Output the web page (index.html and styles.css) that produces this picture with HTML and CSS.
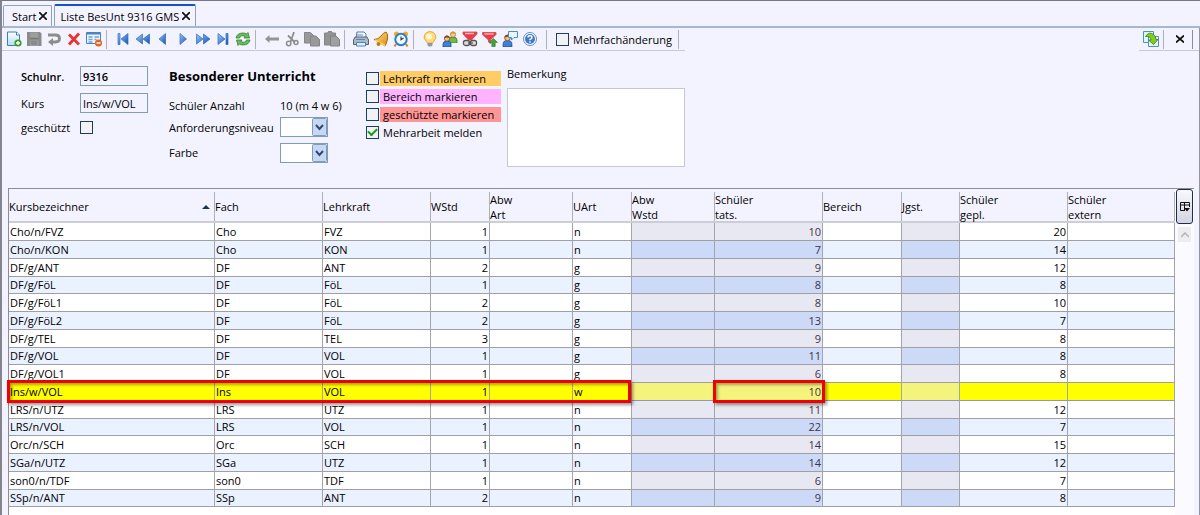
FILE: index.html
```html
<!DOCTYPE html>
<html lang="de">
<head>
<meta charset="utf-8">
<title>Liste BesUnt 9316 GMS</title>
<link rel="stylesheet" href="styles.css">
</head>
<body>
<svg class="defs" aria-hidden="true">
  <defs>
    <linearGradient id="blue" x1="0" y1="0" x2="1" y2="1"><stop offset="0" stop-color="#9cc8f4"/><stop offset="1" stop-color="#1450b4"/></linearGradient>
    <linearGradient id="gold" x1="0" y1="0" x2="1" y2="1"><stop offset="0" stop-color="#ffe27a"/><stop offset="1" stop-color="#d88a10"/></linearGradient>
    <linearGradient id="page" x1="0" y1="0" x2="0" y2="1"><stop offset="0" stop-color="#ffffff"/><stop offset="1" stop-color="#b4dcf4"/></linearGradient>
    <symbol id="person" viewBox="0 0 10 12"><path d="M1 12V9q0-3 4-3t4 3v3z" fill="#3c82d8" stroke="#1c4c96" stroke-width=".8"/><circle cx="5" cy="3.6" r="2.6" fill="#f6bf8a" stroke="#7a4216" stroke-width=".7"/><path d="M2.2 3.4Q2.4.6 5 .6t2.8 2.6Q5 1.8 2.2 3.4z" fill="#824618"/></symbol>
    <symbol id="person-green" viewBox="0 0 10 12"><path d="M1 12V9q0-3 4-3t4 3v3z" fill="#6cbc48" stroke="#377a22" stroke-width=".8"/><circle cx="5" cy="3.6" r="2.6" fill="#f8c890" stroke="#b07020" stroke-width=".7"/><path d="M2.2 3.4Q2.4.6 5 .6t2.8 2.6Q5 1.8 2.2 3.4z" fill="#d89830"/></symbol>
  </defs>
</svg>
<div class="app">
  <nav class="tabs">
    <div class="tab"><span>Start</span><button class="tab-close" aria-label="Start schließen"><svg viewBox="0 0 8 8"><path d="M0 0l8 8M8 0L0 8"/></svg></button></div>
    <div class="tab tab-active"><span>Liste BesUnt 9316 GMS</span><button class="tab-close" aria-label="Liste schließen"><svg viewBox="0 0 8 8"><path d="M0 0l8 8M8 0L0 8"/></svg></button></div>
  </nav>

  <main class="pane">
  <div class="toolbar">
    <div class="tools">
      <div class="group">
        <button aria-label="Neu"><svg viewBox="0 0 16 16"><path d="M1.5 1h9l3 3v10.5h-12z" fill="url(#page)" stroke="#3a80b8"/><path d="M10.500 1v3h3" fill="#fff" stroke="#3a80b8"/><circle cx="12" cy="12" r="3.600" fill="#3f9a2c"/><path d="M12 10v4M10 12h4" stroke="#fff" stroke-width="1.300"/></svg></button>
        <button aria-label="Speichern"><svg viewBox="0 0 16 16"><path d="M1 1h13l1.500 1.500V15H1z" fill="#8b8b8b"/><path d="M4 1.500h8v5H4zM4 9.500h8.500V15H4z" fill="#9e9e9e"/><path d="M4 7.500h8M5 11h6M5 13h6" stroke="#777"/></svg></button>
        <button aria-label="Rückgängig"><svg viewBox="0 0 16 16"><path d="M2 4h7.500q4 0 4 3.500T9.500 11H5" fill="none" stroke="#8c8c8c" stroke-width="2.800"/><path d="M7 7v8l-5-4z" fill="#8c8c8c"/></svg></button>
        <button aria-label="Löschen"><svg viewBox="0 0 16 16"><path d="M3 3.500l10 10M13 2.500l-10 11" stroke="#ee3030" stroke-width="2.800"/></svg></button>
        <button aria-label="Formular leeren"><svg viewBox="0 0 16 16"><path d="M.500 1.500h14v11H.500z" fill="#e8f3fc" stroke="#4a82be"/><path d="M.500 1.500h14v2H.500z" fill="#4a86cc"/><path d="M2.500 6h4M2.500 8.500h4M2.500 11h4M8.500 6h4.500M8.500 8.500h2" stroke="#78a4d0" stroke-width="1.300"/><circle cx="12.500" cy="12" r="3.500" fill="#e8641c"/><path d="M10.500 12h4" stroke="#fff" stroke-width="1.400"/></svg></button>
      </div>
      <span class="sep"></span>
      <div class="group blue">
        <button aria-label="Erster"><svg viewBox="0 0 16 16"><path d="M3 2.500h2v11H3zM13 2.500v11L6 8z"/></svg></button>
        <button aria-label="Zurückspringen"><svg viewBox="0 0 16 16"><path d="M7.500 3v10L1 8zM14.500 3v10L8 8z"/></svg></button>
        <button aria-label="Vorheriger"><svg viewBox="0 0 16 16"><path d="M10.500 2.500v11L4 8z"/></svg></button>
        <button aria-label="Nächster"><svg viewBox="0 0 16 16"><path d="M5 2.500v11L11.500 8z"/></svg></button>
        <button aria-label="Vorspringen"><svg viewBox="0 0 16 16"><path d="M1.500 3v10L8 8zM8.500 3v10L15 8z"/></svg></button>
        <button aria-label="Letzter"><svg viewBox="0 0 16 16"><path d="M3 2.500v11L10 8zM11 2.500h2v11h-2z"/></svg></button>
        <button aria-label="Aktualisieren"><svg class="plain" viewBox="0 0 16 16"><path d="M1 7q1-5 7-5 2 0 3.500 1L13 1.500l1.500 5.500H9l1.200-1.600Q5.500 3.600 4.500 7z" fill="#6dba5c" stroke="#2e8436" stroke-width=".8"/><path d="M15 9q-1 5-7 5-2 0-3.500-1L3 14.500 1.500 9H7l-1.200 1.600Q10.500 12.400 11.500 9z" fill="#6dba5c" stroke="#2e8436" stroke-width=".8"/></svg></button>
      </div>
      <span class="sep"></span>
      <div class="group">
        <button aria-label="Pfeil zurück"><svg viewBox="0 0 16 16"><path d="M1 8l4.500-4v2.500H15v3H5.500V12z" fill="#949494"/></svg></button>
        <button aria-label="Ausschneiden"><svg viewBox="0 0 16 16"><path d="M10 1L6.500 11M4 4.500l7 7" stroke="#8e8e8e" stroke-width="1.800"/><circle cx="4.700" cy="12.500" r="2.200" fill="none" stroke="#8e8e8e" stroke-width="1.500"/><circle cx="12" cy="11.500" r="2" fill="none" stroke="#8e8e8e" stroke-width="1.500"/></svg></button>
        <button aria-label="Kopieren"><svg viewBox="0 0 16 16"><path d="M.500 1.500h6l3 3V12h-9z" fill="#999" stroke="#858585"/><path d="M6.500 5h5.500l3.500 3.500V15h-9z" fill="#999" stroke="#858585"/></svg></button>
        <button aria-label="Einfügen"><svg viewBox="0 0 16 16"><path d="M.500 2h3l1-1.500h3L8.500 2h3v12H.500z" fill="#939393" stroke="#858585"/><path d="M6.500 5h5.500l3.500 3.500V15h-9z" fill="#a0a0a0" stroke="#808080"/></svg></button>
      </div>
      <span class="sep"></span>
      <div class="group">
        <button aria-label="Drucken"><svg viewBox="0 0 16 16"><path d="M4 1h7l2 2v4H3z" fill="#f4faff" stroke="#4c7ca8"/><path d="M2 6h12l1.500 3v4.500H.500V9z" fill="#aeb8c4" stroke="#56606c"/><path d="M3.500 11.500h9V15h-9z" fill="#d8f0ff" stroke="#4c84b4"/><path d="M4 4h6M3 8.500h9" stroke="#468cc8"/></svg></button>
        <button aria-label="Erinnerung"><svg viewBox="0 0 16 16"><path d="M13 1q2.500 2 1.500 7T12 15L1 8.500q4.500 0 7-3.500T13 1z" fill="url(#gold)" stroke="#a8670c"/><path d="M2 9l10 5.500" stroke="#f8d66a" stroke-width="1.500"/><circle cx="5.500" cy="13" r="2" fill="#c07c10"/></svg></button>
        <button aria-label="Termin"><svg viewBox="0 0 16 16"><path d="M3 13l-1.500 2.500M13 13l1.500 2.500" stroke="#d88714" stroke-width="2"/><circle cx="3.500" cy="3" r="2.500" fill="#f0a828"/><circle cx="12.500" cy="3" r="2.500" fill="#f0a828"/><circle cx="8" cy="8.500" r="5.700" fill="#f0faff" stroke="#2f7cc8" stroke-width="2"/><path d="M8 5.500v3.300L10.500 7" fill="none" stroke="#234" stroke-width="1.100"/></svg></button>
      </div>
      <span class="sep"></span>
      <div class="group group-last">
        <button aria-label="Hinweis"><svg viewBox="0 0 16 16"><path d="M8 .5a6 5.500 0 0 0-4 9.500L5.500 12h5l1.500-2A6 5.500 0 0 0 8 .5z" fill="#ffdc78" stroke="#e8a848"/><path d="M5.500 12h5v2.500l-1.500 1H7l-1.500-1z" fill="#9098a4"/><circle cx="7" cy="5.500" r="3" fill="#fff6cc"/></svg></button>
        <button aria-label="Personen"><svg viewBox="0 0 16 16"><use href="#person-green" x="6" y="0" width="10" height="12"/><use href="#person" x="0" y="4" width="10" height="12"/></svg></button>
        <button aria-label="Filter verknüpfen"><svg viewBox="0 0 16 16"><path d="M1 1h14v2L9.500 9H6.500L1 3z" fill="#e83e48" stroke="#d04850" stroke-width=".8"/><path d="M3 2.500h9" stroke="#ffb0b0" stroke-width="1.500"/><rect x="1.500" y="9.500" width="6" height="5" rx="2" fill="#ddd" stroke="#555" stroke-width="1.300"/><rect x="8.500" y="9.500" width="6" height="5" rx="2" fill="#ddd" stroke="#555" stroke-width="1.300"/><path d="M6 12h5" stroke="#555" stroke-width="1.300"/></svg></button>
        <button aria-label="Filter anwenden"><svg viewBox="0 0 16 16"><path d="M.500 1.500h13.500v2L8.500 9v3.500l-2-1.500V9L.500 3.500z" fill="#e83e48" stroke="#d04850" stroke-width=".8"/><path d="M2.500 3h9" stroke="#ffb0b0" stroke-width="1.500"/><path d="M11.500 7.500l4 4h-2.300v4H9.800v-4H7.500z" fill="#3fa43c" stroke="#257a28" stroke-width=".6"/></svg></button>
        <button aria-label="Nachricht"><svg viewBox="0 0 16 16"><use href="#person" x="0" y="3" width="11" height="13"/><path d="M6.500.500h9v6H12L9.500 9V6.500h-3z" fill="#e8f6ff" stroke="#4a8cc8"/></svg></button>
        <button aria-label="Hilfe"><svg viewBox="0 0 16 16"><circle cx="8" cy="8" r="6.500" fill="#fff" stroke="#5a8ecb"/><circle cx="8" cy="8" r="5" fill="#3f78c4"/><path d="M6 6.500Q6 4.800 8 4.800t2 1.600Q10 7.500 8 8.300v1M8 10.300v1.400" fill="none" stroke="#fff" stroke-width="1.400"/></svg></button>
      </div>
      <span class="sep"></span>
      <label class="check"><input type="checkbox">Mehrfachänderung</label>
      <span class="sep"></span>
    </div>
    <div class="tools tools-right">
      <button aria-label="Exportieren"><svg viewBox="0 0 16 16"><path d="M.5.500h10v11H.5z" fill="#e4f4fc" stroke="#4e90c8"/><path d="M5.500 5.500h10v10h-10z" fill="#e4f4fc" stroke="#4e90c8"/><path d="M2.500 5.500Q6 0 10.500 3.500q2.500 2 2.500 5h2L10.500 13.500 5.500 9H8Q7.500 5 2.500 5.500z" fill="#86cc1c" stroke="#328018" stroke-width=".8"/></svg></button>
      <span class="sep"></span>
      <button class="close" aria-label="Schließen"><svg viewBox="0 0 8 8"><path d="M0 .5l8 7M8 .5l-8 7"/></svg></button>
      <span class="sep sep-dark"></span>
    </div>
  </div>

  <form class="form">
    <div class="fields">
      <label class="strong" for="nr">Schulnr.</label><input class="strong" id="nr" type="text" value="9316">
      <label for="kurs">Kurs</label><input id="kurs" type="text" value="Ins/w/VOL">
      <label for="gs">geschützt</label><input id="gs" type="checkbox">
    </div>
    <div class="course">
      <h1>Besonderer Unterricht</h1>
      <span>Schüler Anzahl</span><span>10 (m 4 w 6)</span>
      <label for="niveau">Anforderungsniveau</label><select id="niveau"><option></option></select>
      <label for="farbe">Farbe</label><select id="farbe"><option></option></select>
    </div>
    <div class="marks">
      <label class="check orange"><input type="checkbox"><span>Lehrkraft markieren</span></label>
      <label class="check pink"><input type="checkbox"><span>Bereich markieren</span></label>
      <label class="check red"><input type="checkbox"><span>geschützte markieren</span></label>
      <label class="check"><input type="checkbox" checked><span>Mehrarbeit melden</span></label>
    </div>
    <div class="note">
      <label for="bem">Bemerkung</label>
      <textarea id="bem"></textarea>
    </div>
  </form>

  <div class="list">
    <div class="grid">
      <table>
        <colgroup><col class="w206"><col class="w108"><col class="w108"><col class="w59"><col class="w83"><col class="w59"><col class="w83"><col class="w108"><col class="w79"><col class="w58"><col class="w108"><col class="w107"></colgroup>
        <thead>
          <tr><th><div class="sorted">Kursbezeichner<svg viewBox="0 0 8 4"><path d="M0 4l4-4 4 4z"/></svg></div></th><th><div>Fach</div></th><th><div>Lehrkraft</div></th><th><div>WStd</div></th><th><div>Abw<br>Art</div></th><th><div>UArt</div></th><th><div>Abw<br>Wstd</div></th><th><div>Schüler<br>tats.</div></th><th><div>Bereich</div></th><th><div>Jgst.</div></th><th><div>Schüler<br>gepl.</div></th><th><div>Schüler<br>extern</div></th></tr>
        </thead>
        <tbody>
          <tr><td>Cho/n/FVZ</td><td>Cho</td><td>FVZ</td><td>1</td><td></td><td>n</td><td></td><td>10</td><td></td><td></td><td>20</td><td></td></tr>
          <tr><td>Cho/n/KON</td><td>Cho</td><td>KON</td><td>1</td><td></td><td>n</td><td></td><td>7</td><td></td><td></td><td>14</td><td></td></tr>
          <tr><td>DF/g/ANT</td><td>DF</td><td>ANT</td><td>2</td><td></td><td>g</td><td></td><td>9</td><td></td><td></td><td>12</td><td></td></tr>
          <tr><td>DF/g/FöL</td><td>DF</td><td>FöL</td><td>1</td><td></td><td>g</td><td></td><td>8</td><td></td><td></td><td>8</td><td></td></tr>
          <tr><td>DF/g/FöL1</td><td>DF</td><td>FöL</td><td>2</td><td></td><td>g</td><td></td><td>8</td><td></td><td></td><td>10</td><td></td></tr>
          <tr><td>DF/g/FöL2</td><td>DF</td><td>FöL</td><td>2</td><td></td><td>g</td><td></td><td>13</td><td></td><td></td><td>7</td><td></td></tr>
          <tr><td>DF/g/TEL</td><td>DF</td><td>TEL</td><td>3</td><td></td><td>g</td><td></td><td>9</td><td></td><td></td><td>8</td><td></td></tr>
          <tr><td>DF/g/VOL</td><td>DF</td><td>VOL</td><td>1</td><td></td><td>g</td><td></td><td>11</td><td></td><td></td><td>8</td><td></td></tr>
          <tr><td>DF/g/VOL1</td><td>DF</td><td>VOL</td><td>1</td><td></td><td>g</td><td></td><td>6</td><td></td><td></td><td>8</td><td></td></tr>
          <tr class="selected"><td>Ins/w/VOL</td><td>Ins</td><td>VOL</td><td>1</td><td></td><td>w</td><td></td><td>10</td><td></td><td></td><td></td><td></td></tr>
          <tr><td>LRS/n/UTZ</td><td>LRS</td><td>UTZ</td><td>1</td><td></td><td>n</td><td></td><td>11</td><td></td><td></td><td>12</td><td></td></tr>
          <tr><td>LRS/n/VOL</td><td>LRS</td><td>VOL</td><td>1</td><td></td><td>n</td><td></td><td>22</td><td></td><td></td><td>7</td><td></td></tr>
          <tr><td>Orc/n/SCH</td><td>Orc</td><td>SCH</td><td>1</td><td></td><td>n</td><td></td><td>14</td><td></td><td></td><td>15</td><td></td></tr>
          <tr><td>SGa/n/UTZ</td><td>SGa</td><td>UTZ</td><td>1</td><td></td><td>n</td><td></td><td>14</td><td></td><td></td><td>12</td><td></td></tr>
          <tr><td>son0/n/TDF</td><td>son0</td><td>TDF</td><td>1</td><td></td><td>n</td><td></td><td>6</td><td></td><td></td><td>7</td><td></td></tr>
          <tr><td>SSp/n/ANT</td><td>SSp</td><td>ANT</td><td>2</td><td></td><td>n</td><td></td><td>9</td><td></td><td></td><td>8</td><td></td></tr>
        </tbody>
      </table>
      <span class="frame frame-course"></span>
      <span class="frame frame-count"></span>
    </div>
    <div class="scroll">
      <button class="columns" aria-label="Spalten wählen"><svg viewBox="0 0 10 10"><path d="M5 8.500H.500v-8h9V5M.500 3h9M4.500.500v8" fill="none" stroke="#111"/><path d="M4 6h6L7 9.500z" fill="#111"/></svg></button>
      <button class="up" aria-label="Nach oben"><svg viewBox="0 0 8 6"><path d="M0 5l4-4 4 4" fill="none" stroke="#b4b4b8" stroke-width="1.500"/></svg></button>
    </div>
  </div>
  </main>
</div>
</body>
</html>
```
FILE: styles.css
```css
* { box-sizing: border-box; }
body {
  margin: 0;
  background: #f3f3ff;
  color: #000;
  font: 11px/15px "Open Sans", "Noto Sans", sans-serif;
}
.defs { position: absolute; width: 0; height: 0; }
button { margin: 0; padding: 0; border: 0; background: none; font: inherit; color: inherit; }
svg { display: block; }

.app {
  display: flex;
  flex-direction: column;
  min-height: 100vh;
  border-top: 1px solid #77777f;
  border-left: 2px solid #84848e;
}

.tabs {
  display: flex;
  align-items: flex-end;
  gap: 2px;
  height: 27px;
  padding-left: 1px;
  border-bottom: 2px solid #a8b8cc;
}
.tab {
  display: flex;
  align-items: center;
  gap: 3px;
  height: 21px;
  padding: 0 4px 0 8px;
  border: 1px solid #8ba3bc;
  border-bottom: 0;
  border-radius: 2px 2px 0 0;
}
.tab-active {
  height: 22px;
  padding: 0 5px;
  border-top: 2px solid #1a50c8;
}
.tab-close svg { width: 8px; height: 8px; }
.tab-close path, .close path { fill: none; stroke: #111; stroke-width: 1.7; }

.pane {
  display: flex;
  flex: 1;
  flex-direction: column;
  border-right: 1px solid #9494a0;
}

.toolbar { display: flex; justify-content: space-between; }
.tools {
  display: flex;
  align-items: center;
  height: 23px;
  padding-left: 2px;
  border-bottom: 1px solid #c8c8d4;
}
.tools-right { padding-right: 6px; }
.group { display: flex; }
.group-last { padding-right: 4px; }
.tools button { display: grid; place-items: center; width: 20px; height: 20px; }
.tools svg { width: 16px; height: 16px; }
.blue svg:not(.plain) path { fill: url(#blue); stroke: #2d6cc4; stroke-width: .7; }
.sep { flex: none; width: 1px; height: 19px; margin: 0 6px 0 2px; background: #b0b0b8; }
.sep-dark { margin-right: 0; background: #8c8c94; }
.tools .close svg { width: 8px; height: 8px; }

input[type="checkbox"] {
  appearance: none;
  display: grid;
  place-items: center;
  width: 13px;
  height: 13px;
  margin: 0;
  border: 1px solid #1c3c70;
  background: #f2f2f2;
}
input[type="checkbox"]:checked::after {
  content: "";
  width: 7px;
  height: 4px;
  margin-bottom: 3px;
  border: solid #149a1c;
  border-width: 0 0 2px 2px;
  transform: rotate(-45deg);
}
.check { display: flex; align-items: center; gap: 4px; }
.tools .check { padding: 0 4px 0 3px; }

.form {
  display: flex;
  align-items: flex-start;
  height: 137px;
  padding: 15px 0 0 19px;
  white-space: nowrap;
}
.fields {
  display: grid;
  grid-template-columns: 59px 68px;
  grid-template-rows: 20px 20px 14px;
  row-gap: 7px;
  align-items: center;
  margin-right: 21px;
}
input[type="text"] {
  width: 100%;
  height: 20px;
  padding: 0 2px;
  border: 1px solid #7f9db9;
  background: #f3f3ff;
  color: inherit;
  font: inherit;
}
.fields .strong { font-weight: 600; }
.course {
  display: grid;
  grid-template-columns: 111px 60px;
  grid-template-rows: 28px 22px 22px 29px;
  align-items: center;
  margin-right: 26px;
}
.course h1 { grid-column: 1 / 3; margin: 0; align-self: start; font-size: 13px; line-height: 20px; font-weight: 700; }
select {
  appearance: none;
  width: 48px;
  height: 20px;
  border: 1px solid #7f9db9;
  border-radius: 0;
  background:
    url("data:image/svg+xml,%3Csvg xmlns='http://www.w3.org/2000/svg' width='15' height='18'%3E%3Crect x='.5' y='.5' width='14' height='17' rx='1' fill='%23c8d8f4' stroke='%237f9db9'/%3E%3Cpath d='M4 7l3.500 4L11 7' fill='none' stroke='%232c4a78' stroke-width='2'/%3E%3C/svg%3E") right center no-repeat #fff;
}
.marks { display: flex; flex-direction: column; gap: 3px; width: 135px; padding-top: 5px; }
.marks .check { gap: 1px; }
.marks .check span { flex: 1; padding-left: 3px; }
.orange span { background: #ffcc66; }
.pink span { background: #ffb3ff; }
.red span { background: #ff9494; }
.note { display: flex; flex-direction: column; gap: 7px; margin-left: 6px; }
textarea {
  width: 178px;
  height: 79px;
  padding: 2px;
  border: 1px solid #c8c8d0;
  background: #fff;
  font: inherit;
  resize: none;
}

.list {
  display: flex;
  flex: 1;
  margin: 0 5px 0 6px;
  border-top: 1px solid #8c8c94;
  border-left: 1px solid #8c8c94;
}
.grid { position: relative; flex: 1; background: #fff; }
table { width: 100%; table-layout: fixed; border-collapse: separate; border-spacing: 0; }
.w206 { width: 206px; }
.w108 { width: 108px; }
.w107 { width: 107px; }
.w83 { width: 83px; }
.w79 { width: 79px; }
.w59 { width: 59px; }
.w58 { width: 58px; }
th {
  height: 34px;
  padding: 3px 0 0;
  border-bottom: 2px solid #cdcdd8;
  background: #f3f3ff;
  font-weight: 400;
  text-align: left;
}
th div {
  display: flex;
  align-items: center;
  height: 29px;
  border-right: 1px solid #b0b0b8;
}
.sorted { justify-content: space-between; padding-right: 4px; }
.sorted svg { width: 8px; height: 4px; fill: #1c3450; }
td {
  height: 18px;
  padding: 0 1px;
  border-right: 1px solid #a4a4ac;
  border-bottom: 1px solid #a0a0a4;
  line-height: 16px;
}
tr:nth-child(4n) td { height: 17px; }
tr:nth-child(even) td { background: #eaf1ff; }
td:nth-child(7), td:nth-child(8), td:nth-child(10) { background: #e8e8f2; }
tr:nth-child(even) :is(td:nth-child(7), td:nth-child(8), td:nth-child(10)) { background: #ccdaf8; }
td:nth-child(4), td:nth-child(8), td:nth-child(11) { text-align: right; }
td:nth-child(8) { color: #3c3448; }
tbody tr.selected td { background: #ffff00; border-bottom-color: #9494b8; }
tbody tr.selected :is(td:nth-child(7), td:nth-child(8), td:nth-child(10)) { background: #f4f47c; }
.frame {
  position: absolute;
  top: 191px;
  height: 23px;
  border: 3px solid #f00000;
  box-shadow: 2px 2px 3px #00000066, inset 2px 2px 3px #00000055;
}
.frame-course { left: -2px; width: 53.5%; }
.frame-count { left: 60.4%; width: 9.6%; }

.scroll { display: flex; flex-direction: column; align-items: center; width: 19px; background: #fafaff; }
.columns {
  display: grid;
  place-items: center;
  width: 17px;
  height: 35px;
  border: 1px solid #1c2c54;
  border-radius: 3px;
  background: linear-gradient(#f8f8ff, #d4d4e0);
}
.columns svg { width: 10px; height: 10px; }
.up { display: grid; place-items: center; width: 13px; height: 15px; margin-top: 3px; background: #ededf0; }
.up svg { width: 8px; height: 6px; }
```
